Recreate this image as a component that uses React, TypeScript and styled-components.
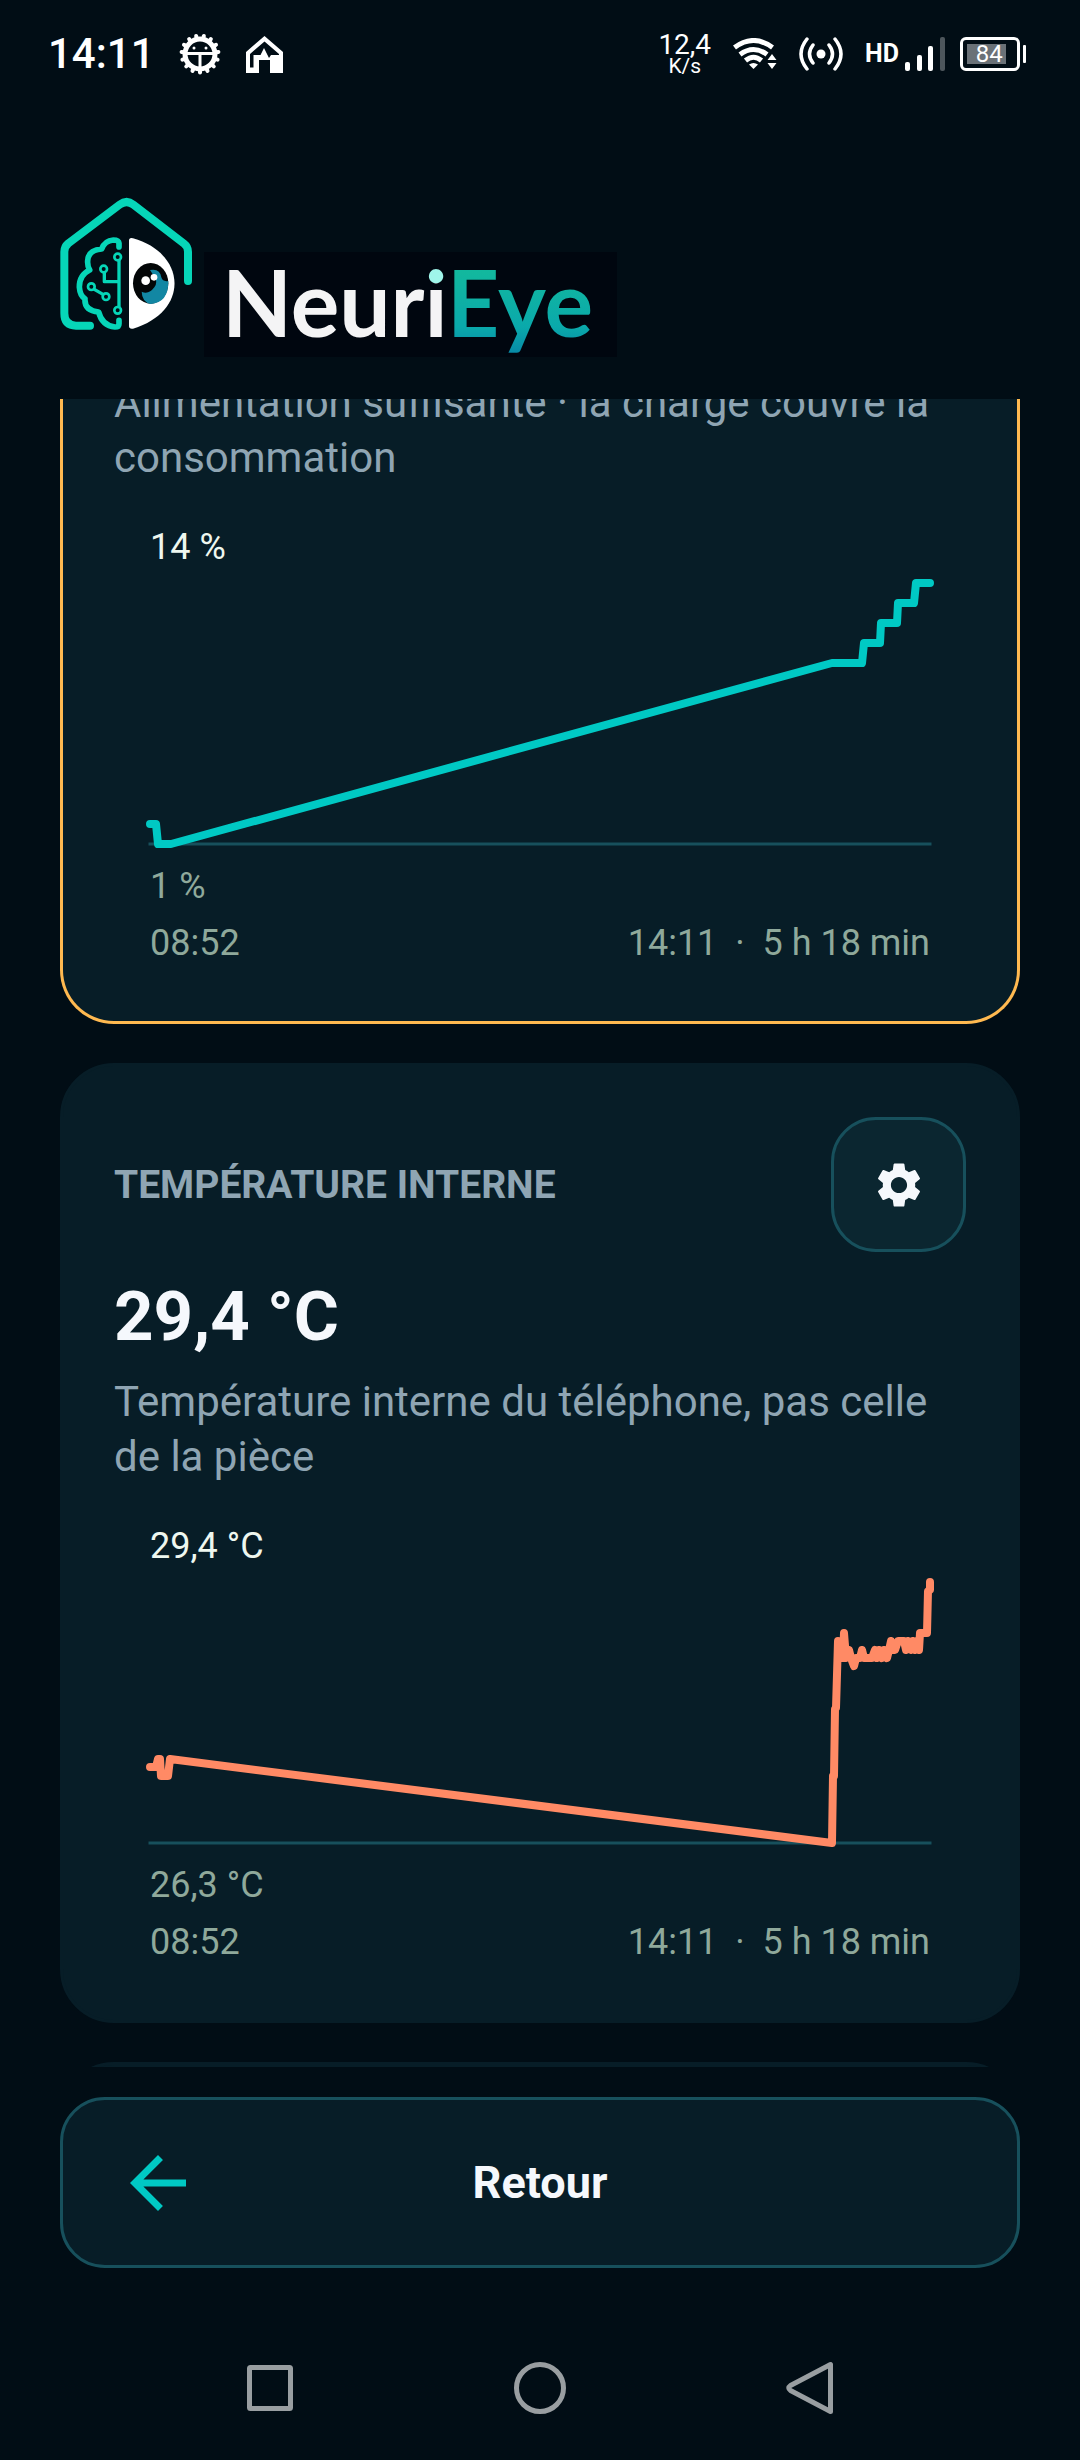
import React from "react";
import styled, { createGlobalStyle } from "styled-components";
import { MdArrowBack, MdSettings } from "react-icons/md";

const color = {
  page: "#010d15",
  card: "#071d27",
  raised: "#0b2630",
  outline: "#17505c",
  amber: "#ffb950",
  teal: "#00c9c4",
  coral: "#ff8a65",
  text: "#f5f8fc",
  muted: "#8fa5b3",
  chartHigh: "#eef7ef",
  chartLow: "#8fa99b",
  nav: "#999ea1",
};

const GlobalStyle = createGlobalStyle`
  *, *::before, *::after { box-sizing: border-box; }
  body {
    margin: 0;
    background: ${color.page};
    font-family: Roboto, "Noto Sans", sans-serif;
    color: ${color.text};
  }
  button { font: inherit; color: inherit; cursor: pointer; }
  h1, h2, p, dl, dd, figure { margin: 0; }
`;

const Screen = styled.div`
  display: flex;
  flex-direction: column;
  height: 100vh;
  overflow: hidden;
`;

/* ---------- Status bar ---------- */

const StatusBar = styled.div`
  display: flex;
  align-items: center;
  justify-content: space-between;
  flex: none;
  height: 108px;
  padding: 0 54px 0 48px;
  color: #fff;
`;

const StatusGroup = styled.div<{ $gap: number }>`
  display: flex;
  align-items: center;
  gap: ${(p) => p.$gap}px;
`;

const Clock = styled.span`
  font-size: 42px;
  line-height: 50px;
  font-weight: 500;
`;

const NetSpeed = styled.span`
  display: flex;
  flex-direction: column;
  align-items: center;
  font-size: 28px;
  line-height: 24px;
`;

const NetUnit = styled.span`
  font-size: 21px;
  line-height: 18px;
`;

const Mobile = styled.span`
  display: flex;
  align-items: center;
  gap: 6px;
  font-size: 25px;
  line-height: 30px;
  font-weight: 700;
`;

const Battery = styled.span`
  display: flex;
  align-items: center;
  gap: 3px;

  &::after {
    content: "";
    width: 3px;
    height: 18px;
    border-radius: 1px;
    background: #fff;
  }
`;

const BatteryShell = styled.span`
  display: flex;
  width: 60px;
  height: 34px;
  padding: 4px;
  border: 3px solid #fff;
  border-radius: 6px;
`;

const BatteryLevel = styled.span`
  display: flex;
  align-items: center;
  justify-content: flex-end;
  width: 84%;
  height: 20px;
  padding-right: 3px;
  background: #6a7177;
  font-size: 24px;
  line-height: 20px;
`;

/* ---------- Brand header ---------- */

const Header = styled.header`
  display: flex;
  align-items: flex-start;
  flex: none;
  padding: 84px 60px 42px;
`;

const Wordmark = styled.h1`
  margin-top: 60px;
  height: 105px;
  padding: 0 24px 0 18px;
  background: #00060f;
  font-family: Lato, sans-serif;
  font-size: 91px;
  line-height: 99px;
  font-weight: 700;
  color: #f4f4f5;
  white-space: nowrap;
`;

const DottedI = styled.span`
  background: linear-gradient(#9ff5ea 0 36px, #f4f4f5 36px);
  background-clip: text;
  -webkit-background-clip: text;
  color: transparent;
`;

const Accent = styled.span`
  background: linear-gradient(#12b89e 25px, #0aa9ab 80px, #078aa6 106px);
  background-clip: text;
  -webkit-background-clip: text;
  color: transparent;
`;

/* ---------- Cards ---------- */

const Scroller = styled.main`
  flex: 1;
  min-height: 0;
  overflow: hidden;
  padding: 0 60px;
`;

/* The list rests part-way scrolled under the header. */
const CardList = styled.div`
  display: flex;
  flex-direction: column;
  gap: 39px;
  margin-top: -24px;
`;

const Card = styled.section<{ $border?: string; $continued?: boolean }>`
  min-height: 240px;
  padding: ${(p) => (p.$continued ? "0 51px 51px" : "51px")};
  background: ${color.card};
  border: 3px solid ${(p) => p.$border ?? color.card};
  border-top-width: ${(p) => (p.$continued ? "0" : "3px")};
  border-radius: ${(p) => (p.$continued ? "0 0 54px 54px" : "54px")};
`;

const CardHeader = styled.div`
  display: flex;
  align-items: center;
  justify-content: space-between;
  margin-bottom: 24px;
`;

const CardTitle = styled.h2`
  font-size: 39px;
  line-height: 46px;
  font-weight: 700;
  color: ${color.muted};
`;

const SettingsButton = styled.button`
  display: grid;
  place-items: center;
  width: 135px;
  height: 135px;
  padding: 0;
  background: ${color.raised};
  border: 3px solid ${color.outline};
  border-radius: 45px;
`;

const Reading = styled.p`
  margin-bottom: 17px;
  font-size: 69px;
  line-height: 81px;
  font-weight: 700;
`;

const Description = styled.p`
  font-size: 42px;
  line-height: 55px;
  color: ${color.muted};
`;

const Chart = styled.figure`
  display: flex;
  flex-direction: column;
  padding: 41px 36px 6px;
  font-size: 36px;
  line-height: 42px;
  color: ${color.chartLow};
`;

const ChartHigh = styled.span`
  margin-bottom: 15px;
  color: ${color.chartHigh};
`;

const ChartLow = styled.span`
  margin: 21px 0 15px;
`;

const Plot = styled.svg`
  display: block;
  width: 100%;
  overflow: visible;
`;

const ChartSpan = styled.figcaption`
  display: flex;
  justify-content: space-between;
  white-space: pre;
`;

/* ---------- Bottom ---------- */

const Footer = styled.footer`
  flex: none;
  padding: 30px 60px 48px;
`;

const BackButton = styled.button`
  display: grid;
  grid-template-columns: 84px 1fr 84px;
  align-items: center;
  width: 100%;
  height: 171px;
  padding: 0 53px;
  background: ${color.card};
  border: 3px solid ${color.outline};
  border-radius: 45px;
  font-size: 45px;
  line-height: 54px;
  font-weight: 700;

  svg { color: ${color.teal}; }
`;

const SystemNav = styled.nav`
  display: grid;
  grid-template-columns: repeat(3, 1fr);
  flex: none;
  height: 144px;
  padding: 0 12.5%;
`;

const NavButton = styled.button`
  display: grid;
  place-items: center;
  padding: 0;
  border: 0;
  background: none;
`;

/* ---------- Drawings ---------- */

const CogIcon = () => (
  <svg width="42" height="42" viewBox="0 0 42 42" fill="none" stroke="#fff">
    <circle cx="21" cy="21" r="15" strokeWidth="5" />
    {Array.from({ length: 15 }, (_, i) => (
      <path key={i} d="M21 37v2.500" strokeWidth="4" strokeLinecap="round" transform={`rotate(${i * 24} 21 21)`} />
    ))}
    <path d="M7 20.500h28M21 21v15" strokeWidth="3" />
    <circle cx="15" cy="15" r="1.500" fill="#fff" stroke="none" />
    <circle cx="27" cy="15" r="1.500" fill="#fff" stroke="none" />
  </svg>
);

const HouseIcon = () => (
  <svg width="39" height="39" viewBox="0 0 39 39" fill="#fff">
    <path
      fillRule="evenodd"
      d="M19.500 1 38 17v21H25V25H14v13H1V17ZM19.500 6.500 5 19v13.500h3.500V20h7l3.500-7 3.500 7 1.500 3 2-3H34v-1Z"
    />
  </svg>
);

const WifiIcon = () => (
  <svg width="44" height="32" viewBox="0 0 44 32" fill="none" stroke="#fff" strokeWidth="5">
    <path d="M1.500 9.500Q20.500-4.500 39.500 9.500" />
    <path d="M7 16.500Q20.500 6.500 34 16.500" />
    <path d="M12.500 22.500Q20.500 16 28.500 22.500" />
    <path d="M16 26.500Q20.500 23.500 25 26.500L20.500 31Z" fill="#fff" stroke="none" />
    <path d="M39 16l4.500 6h-9ZM39 31l-4.500-6h9Z" fill="#fff" stroke="none" />
  </svg>
);

const HotspotIcon = () => (
  <svg width="44" height="34" viewBox="0 0 44 34" fill="none" stroke="#fff" strokeWidth="3.500" strokeLinecap="round">
    <circle cx="22" cy="17" r="4.500" fill="#fff" stroke="none" />
    <path d="M14 8Q7 17 14 26M30 8Q37 17 30 26M8 2Q-4 17 8 32M36 2Q48 17 36 32" />
  </svg>
);

const SignalIcon = () => (
  <svg width="40" height="34" viewBox="0 0 40 34" fill="#fff">
    <rect x="0" y="25" width="5" height="9" rx="2" />
    <rect x="12" y="18" width="5" height="16" rx="2" />
    <rect x="23" y="9" width="5" height="25" rx="2" />
    <rect x="35" y="0" width="5" height="34" rx="2" fill="#4d565c" />
  </svg>
);

const Logo = () => (
  <svg width="144" height="144" viewBox="30 36 432 432" fill="none" stroke="#06d6b8" strokeLinecap="round" strokeLinejoin="round">
    <path
      strokeWidth="24"
      d="M414 303V215Q414 200 402 191L250 74Q230 58 209 74L55 190Q43 200 43 215V400Q43 437 78 437H120"
    />
    <path
      strokeWidth="17"
      d="M207 201V190Q206 180 190 180Q164 182 155 207Q114 210 113 243Q112 258 119 270Q88 285 88 321Q90 348 105 356Q102 392 146 396Q156 437 195 441Q207 441 207 431V421"
    />
    <path strokeWidth="10" d="M207 240V382M163 278V305H206M133 328L159 343" />
    <g strokeWidth="8" fill="#010d15">
      <circle cx="203" cy="231" r="10" />
      <circle cx="161" cy="267" r="10" />
      <circle cx="124" cy="320" r="10" />
      <circle cx="168" cy="350" r="10" />
      <circle cx="203" cy="391" r="10" />
    </g>
    <g stroke="none">
      <path fill="#fff" d="M237 182Q237 172 249 175C410 220 420 395 249 446Q237 448 237 438Z" />
      <ellipse cx="302" cy="310" rx="53" ry="61" fill="#030607" />
      <path fill="#1287a3" d="M300 270Q330 264 334 292Q338 306 355 303Q356 368 302 372Q276 366 275 335Q296 345 313 322Q324 308 314 292Z" />
      <circle cx="287" cy="302" r="13" fill="#fff" />
      <circle cx="312" cy="292" r="10" fill="#fff" />
    </g>
  </svg>
);

/* Points are in plot units: x runs over 780, y over 261 from the top. */
const batteryLine: number[][] = [
  [0, 241], [6, 241], [8, 261], [21, 261], [682, 80], [712, 80], [714, 60], [730, 60],
  [731, 40], [747, 40], [748, 20], [764, 20], [766, 0], [780, 0],
];

const temperatureLine: number[][] = [
  [0, 185], [6, 185], [8, 177], [10, 177], [11, 194], [18, 194], [20, 177], [682, 261],
  [683, 194], [684, 194], [685, 127], [686, 126], [688, 59], [690, 76], [693, 76], [694, 51],
  [696, 76], [699, 68], [701, 76], [704, 84], [706, 76], [710, 76], [712, 68], [714, 76],
  [722, 76], [725, 68], [727, 76], [729, 68], [732, 76], [734, 68], [737, 76], [739, 68],
  [741, 59], [743, 68], [745, 68], [748, 59], [754, 59], [756, 68], [758, 59], [761, 68],
  [763, 59], [765, 68], [767, 59], [769, 68], [770, 51], [777, 51], [778, 9], [780, 8], [780, 0],
];

type TrendProps = {
  label: string;
  points: number[][];
  stroke: string;
  high: string;
  low: string;
};

function Trend({ label, points, stroke, high, low }: TrendProps) {
  return (
    <Chart>
      <ChartHigh>{high}</ChartHigh>
      <Plot viewBox="0 0 780 261" role="img" aria-label={label}>
        <path d="M0 261H780" stroke={color.outline} strokeWidth="3" strokeLinecap="square" />
        <polyline
          points={points.map((p) => p.join(",")).join(" ")}
          fill="none"
          stroke={stroke}
          strokeWidth="8"
          strokeLinecap="round"
          strokeLinejoin="round"
        />
      </Plot>
      <ChartLow>{low}</ChartLow>
      <ChartSpan>
        <span>08:52</span>
        <span>{"14:11  ·  5 h 18 min"}</span>
      </ChartSpan>
    </Chart>
  );
}

export default function App() {
  return (
    <Screen>
      <GlobalStyle />
      <StatusBar>
        <StatusGroup $gap={24}>
          <Clock>14:11</Clock>
          <CogIcon />
          <HouseIcon />
        </StatusGroup>
        <StatusGroup $gap={22}>
          <NetSpeed>
            12,4
            <NetUnit>K/s</NetUnit>
          </NetSpeed>
          <WifiIcon />
          <HotspotIcon />
          <StatusGroup $gap={15}>
            <Mobile>
              HD
              <SignalIcon />
            </Mobile>
            <Battery>
              <BatteryShell>
                <BatteryLevel>84</BatteryLevel>
              </BatteryShell>
            </Battery>
          </StatusGroup>
        </StatusGroup>
      </StatusBar>

      <Header>
        <Logo />
        <Wordmark>
          Neur<DottedI>i</DottedI>
          <Accent>Eye</Accent>
        </Wordmark>
      </Header>

      <Scroller>
        <CardList>
          <Card $border={color.amber} $continued>
            <Description>Alimentation suffisante · la charge couvre la consommation</Description>
            <Trend label="Batterie" points={batteryLine} stroke={color.teal} high="14 %" low="1 %" />
          </Card>
          <Card>
            <CardHeader>
              <CardTitle>TEMPÉRATURE INTERNE</CardTitle>
              <SettingsButton aria-label="Réglages">
                <MdSettings size={54} />
              </SettingsButton>
            </CardHeader>
            <Reading>29,4 °C</Reading>
            <Description>Température interne du téléphone, pas celle de la pièce</Description>
            <Trend label="Température" points={temperatureLine} stroke={color.coral} high="29,4 °C" low="26,3 °C" />
          </Card>
          <Card />
        </CardList>
      </Scroller>

      <Footer>
        <BackButton>
          <MdArrowBack size={84} />
          <span>Retour</span>
        </BackButton>
      </Footer>

      <SystemNav>
        <NavButton aria-label="Applications récentes">
          <svg width="54" height="54" viewBox="0 0 54 54" fill="none" stroke={color.nav} strokeWidth="5">
            <rect x="6.500" y="6.500" width="41" height="41" rx="1" />
          </svg>
        </NavButton>
        <NavButton aria-label="Accueil">
          <svg width="54" height="54" viewBox="0 0 54 54" fill="none" stroke={color.nav} strokeWidth="5">
            <circle cx="27" cy="27" r="23.500" />
          </svg>
        </NavButton>
        <NavButton aria-label="Retour système">
          <svg width="54" height="54" viewBox="0 0 54 54" fill="none" stroke={color.nav} strokeWidth="5" strokeLinejoin="round">
            <path d="M47.500 3.500V50.500L7.500 29.500Q4 27 7.500 24.500Z" />
          </svg>
        </NavButton>
      </SystemNav>
    </Screen>
  );
}
